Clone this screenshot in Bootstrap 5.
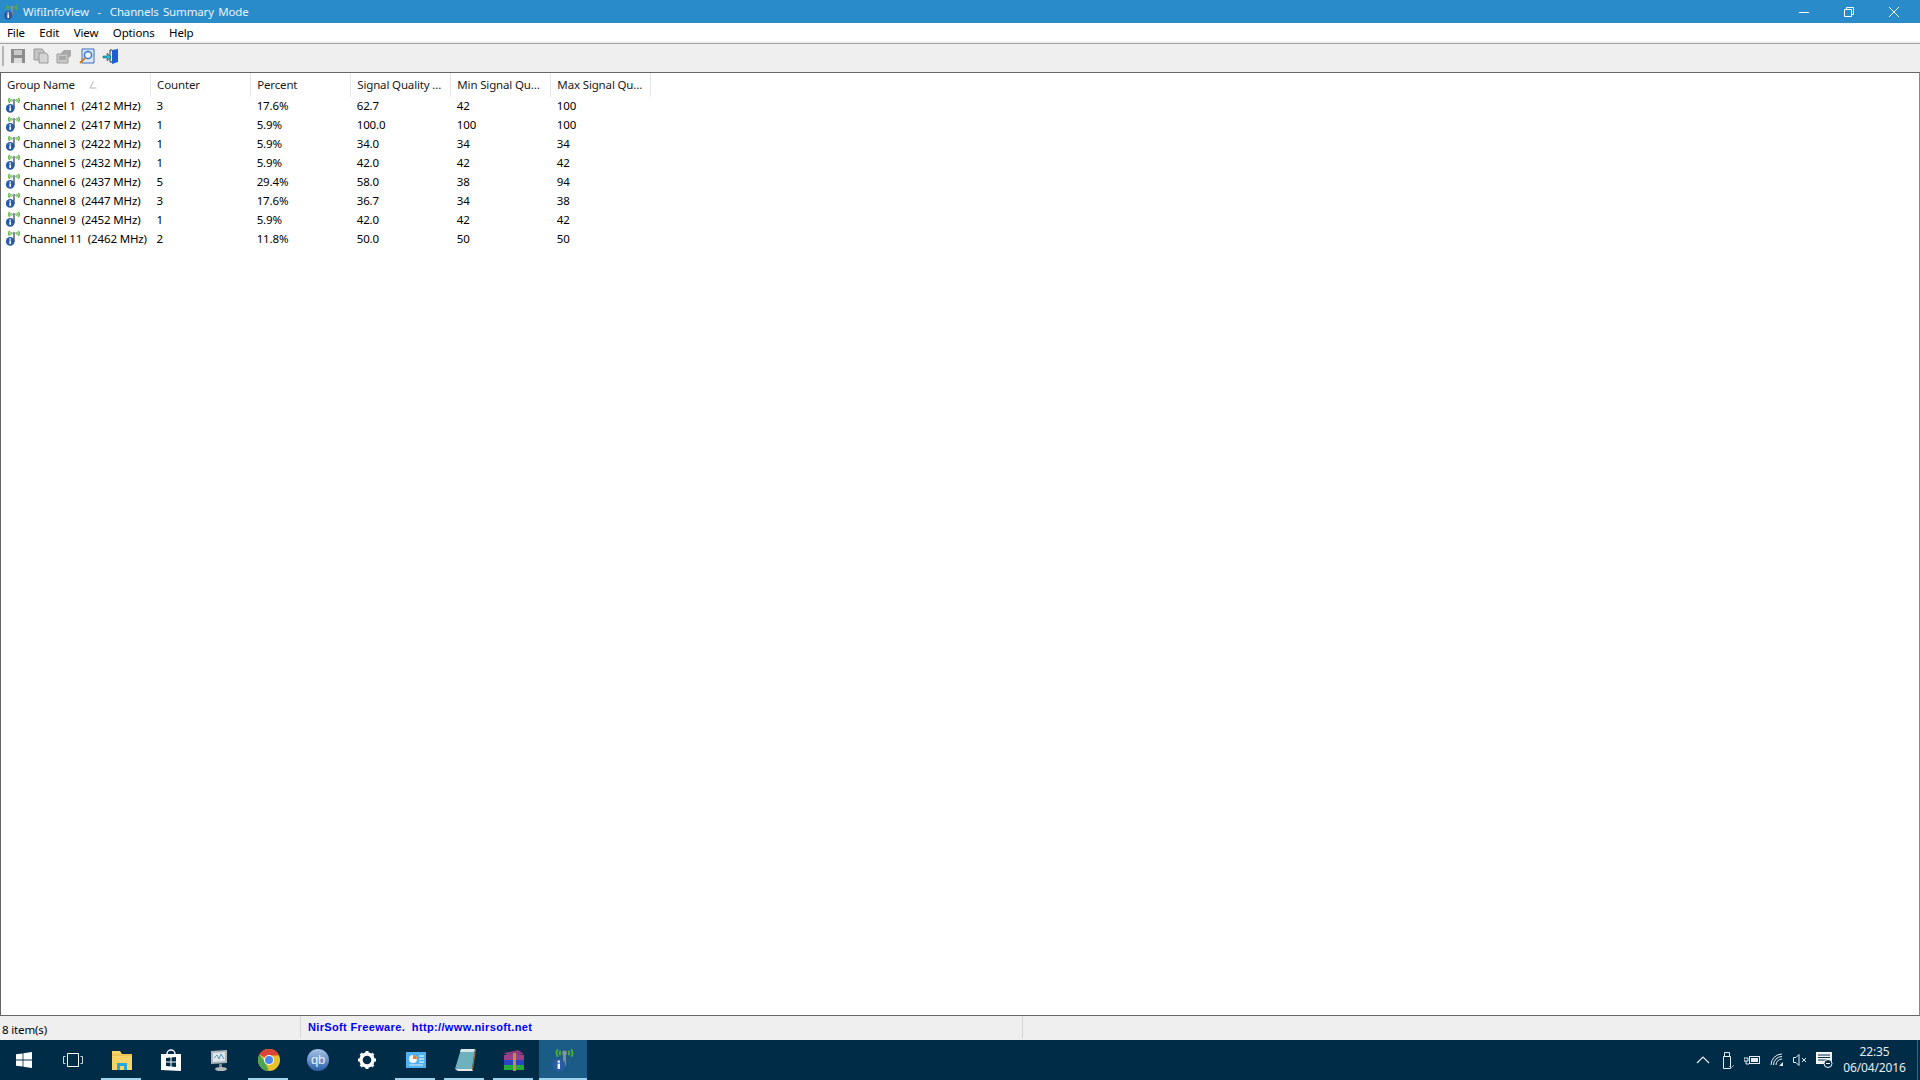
<!DOCTYPE html>
<html lang="en">
<head>
<meta charset="UTF-8">
<title>WifiInfoView - Channels Summary Mode</title>
<link href="https://cdn.jsdelivr.net/npm/bootstrap@5.3.0/dist/css/bootstrap.min.css" rel="stylesheet">
<style>
html, body { height: 100%; overflow: hidden; }
body { font-family: "Noto Sans", "Liberation Sans", sans-serif; font-size: 11.5px; letter-spacing: -.15px; color: #000; background: #fff; }
.app { height: 1080px; }
.titlebar { height: 23px; background: #2a8bcb; color: #fff; padding-left: 3px; }
.titlebar .ttl { margin-left: 4px; white-space: pre; color: #e8f3fa; word-spacing: 1.5px; }
.winctl { margin-right: 4px; }
.winbtn { width: 45px; height: 21px; }
.menubar { height: 20px; background: #fff; padding: 2px 0 0 7px; gap: 14.5px; border-bottom: 2px solid #f0f0f0; }
.tools { height: 29px; background: #efefef; border-top: 1px solid #a0a0a0; padding: 0 0 5px 1px; }
.tools .grip { width: 2px; height: 20px; background: #b5b5b5; margin: 0 6px 0 1px; }
.tools svg { margin-right: 7px; }
.listwrap { flex: 1; border: 1px solid #666; border-right-color: #888; min-height: 0; background: #fff; }
.wifitable { table-layout: fixed; width: 650px; margin: 0; }
.wifitable th, .wifitable td { padding: 0 0 0 6.5px; font-weight: 400; border: 0; white-space: pre; overflow: hidden; background: transparent; color: #000; font-size: 11.5px; letter-spacing: -.15px; }
.wifitable th { height: 24px; border-right: 1px solid #e5e5e5; position: relative; color: #1a1a1a; vertical-align: middle; padding-bottom: 1px; }
.wifitable th:first-child { padding-left: 6px; }
.wifitable td { height: 19px; line-height: 18px; padding-bottom: 1px; }
.wifitable td:first-child { padding-left: 4px; }
.wifitable td svg { vertical-align: -3px; margin-right: 2px; }
.sortmark { position: absolute; left: 88px; top: 8px; }
.statusbar { height: 24px; background: #efefef; }
.statusbar .cnt { width: 300px; padding-left: 2px; padding-top: 5px; }
.statusbar .lnk { width: 723px; border-left: 1px solid #d5d5d5; border-right: 1px solid #d5d5d5; padding-left: 7px; height: 22px; font-family: "Liberation Sans", Arial, sans-serif; font-weight: 700; font-size: 11px; letter-spacing: .35px; color: #0000f0; white-space: pre; line-height: 22px; }
.taskbar { height: 40px; background: #002c48; color: #e6edf2; }
.tbtn { width: 49px; height: 40px; position: relative; }
.tbtn.first { width: 48px; }
.tbtn.run::after { content: ""; position: absolute; left: 4px; right: 5px; bottom: 0; height: 2px; background: #9fd3ee; }
.tbtn.act { background: #1a5c85; width: 48px; margin-left: 1px; }
.tbtn.act::after { left: 0; right: 0; }
.trayi { width: 24.5px; height: 40px; }
.trayi.tight { width: 23.5px; }
.clock { width: 74px; margin-left: .5px; margin-right: 5.5px; font-size: 12px; line-height: 16px; text-align: center; color: #e6edf2; }
.deskline { width: 1px; height: 40px; background: #3d6078; margin-right: 2px; }
</style>
</head>
<body>
<svg width="0" height="0" class="d-block" style="position:absolute">
  <symbol id="wifi" viewBox="0 0 16 16">
    <path d="M4.500 .8a4.500 4.500 0 0 0 0 5M6.300 1.800a2.600 2.600 0 0 0 0 3M13.500 .8a4.500 4.500 0 0 1 0 5M11.700 1.800a2.600 2.600 0 0 1 0 3" fill="none" stroke="#4fb030" stroke-width="1.200"/>
    <rect x="8" y="4" width="2" height="8" fill="#7f8a96"/>
    <circle cx="9" cy="3.300" r="1.600" fill="#87929e"/>
    <circle cx="5.200" cy="11.400" r="4.300" fill="#2a5ca6"/>
    <rect x="4.400" y="10.400" width="1.600" height="3.500" fill="#fff"/>
    <rect x="4.400" y="8.400" width="1.600" height="1.300" fill="#fff"/>
  </symbol>
</svg>

<div class="app d-flex flex-column">
  <div class="titlebar d-flex align-items-center">
    <svg width="16" height="16"><use href="#wifi"/></svg>
    <span class="ttl">WifiInfoView  -  Channels Summary Mode</span>
    <div class="ms-auto d-flex winctl">
      <div class="winbtn d-flex align-items-center justify-content-center"><svg width="10" height="10"><path d="M0 5.500h10" stroke="#fff"/></svg></div>
      <div class="winbtn d-flex align-items-center justify-content-center"><svg width="10" height="10"><path d="M.5 2.500h7v7h-7zM2.500 2.500v-2h7v7h-2" fill="none" stroke="#fff"/></svg></div>
      <div class="winbtn d-flex align-items-center justify-content-center"><svg width="10" height="10"><path d="M0 0l10 10M10 0L0 10" stroke="#fff"/></svg></div>
    </div>
  </div>

  <div class="menubar d-flex align-items-center">
    <span>File</span><span>Edit</span><span>View</span><span>Options</span><span>Help</span>
  </div>

  <div class="tools d-flex align-items-center">
    <span class="grip"></span>
    <svg width="16" height="16"><path d="M1 1h14v14H1z" fill="#8c8c8c"/><rect x="4" y="2" width="8" height="5" fill="#c9c9c9"/><rect x="4" y="10" width="8" height="5" fill="#dcdcdc"/></svg>
    <svg width="16" height="16"><path d="M1 1h8l2 2v9H1z" fill="#c4c4c4" stroke="#9a9a9a"/><path d="M6 5h7l2 2v8H6z" fill="#d4d4d4" stroke="#9a9a9a"/></svg>
    <svg width="16" height="16"><path d="M1 6h11v9H1z" fill="#c8c8c8" stroke="#9c9c9c"/><path d="M4 6l4-4h7v6l-3 2V6z" fill="#a8a8a8"/><path d="M3 9h7M3 11h7" stroke="#8a8a8a"/></svg>
    <svg width="16" height="16"><path d="M3 1h12v14H3z" fill="#d9e8fa" stroke="#3a6fc0"/><circle cx="9" cy="7" r="3.600" fill="#eef6ff" stroke="#3a78c8" stroke-width="1.500"/><path d="M6 10l-5 5" stroke="#d2781e" stroke-width="2"/></svg>
    <svg width="17" height="16" viewBox="-1 0 17 16"><path d="M9 2l6-1v13l-6 2z" fill="#1f5fd0"/><path d="M9 2H7v12h2" fill="none" stroke="#333"/><path d="M0 8h4V5l4 4-4 4v-3H0z" fill="#17c4e8" stroke="#111" stroke-width=".4"/></svg>
  </div>

  <div class="listwrap">
    <table class="table wifitable" id="rows">
      <colgroup><col style="width:149px"><col style="width:100px"><col style="width:100px"><col style="width:100px"><col style="width:100px"><col style="width:100px"></colgroup>
      <thead>
        <tr>
          <th>Group Name<svg class="sortmark" width="8" height="8"><path d="M4.500 .5L1 7h6.500" fill="none" stroke="#b5b5b5"/></svg></th>
          <th>Counter</th><th>Percent</th><th>Signal Quality ...</th><th>Min Signal Qu...</th><th>Max Signal Qu...</th>
        </tr>
      </thead>
      <tbody></tbody>
    </table>
  </div>

  <div class="statusbar d-flex">
    <div class="cnt">8 item(s)</div>
    <div class="lnk">NirSoft Freeware.  http://www.nirsoft.net</div>
  </div>

  <div class="taskbar d-flex align-items-center">
    <div class="tbtn first d-flex align-items-center justify-content-center">
      <svg width="16" height="16"><path d="M0 2.300l6.600-.9v6.200H0zM7.400 1.300L16 0v7.600H7.400zM0 8.400h6.600v6.200L0 13.700zM7.400 8.400H16V16l-8.600-1.300z" fill="#fff"/></svg>
    </div>
    <div class="tbtn d-flex align-items-center justify-content-center">
      <svg width="20" height="16"><path d="M4.500 1.500h11v13h-11z" fill="none" stroke="#fff"/><path d="M2.500 4.500H.5v7h2M17.500 4.500h2v7h-2" fill="none" stroke="#cfd8de"/></svg>
    </div>
    <div class="tbtn run d-flex align-items-center justify-content-center">
      <svg width="22" height="22"><path d="M1 2h8l2 3h10v16H1z" fill="#f6d468"/><path d="M1 6h20" stroke="#e4b640"/><path d="M6 14h10v7h-3v-4H9v4H6z" fill="#23a9e0"/></svg>
    </div>
    <div class="tbtn d-flex align-items-center justify-content-center">
      <svg width="22" height="24"><path d="M7 6a4 4 0 0 1 8 0" fill="none" stroke="#fff" stroke-width="1.400"/><path d="M1 6h20v17l-20-1z" fill="#fff"/><path d="M6 10l4.500-.5v4H6zM11.500 9.400l4.500-.4v4.500h-4.500zM6 14.500h4.500v4L6 18zM11.500 14.500H16V19l-4.500-.5z" fill="#002c48"/></svg>
    </div>
    <div class="tbtn d-flex align-items-center justify-content-center">
      <svg width="24" height="24"><path d="M3 3l16-1v13L3 16z" fill="#aeb6bb"/><path d="M5 5l12-1v9L5 14z" fill="#dfe8ee"/><path d="M6 10l3-3 2 4 2-5 3 5" fill="none" stroke="#5b93b8"/><path d="M11 16h3v3h-3z" fill="#888"/><ellipse cx="13" cy="21" rx="6" ry="2" fill="#b9b9b9"/></svg>
    </div>
    <div class="tbtn run d-flex align-items-center justify-content-center">
      <svg width="24" height="24" viewBox="0 0 24 24"><circle cx="12" cy="12" r="11" fill="#e9c12d"/><path d="M12 12L2.500 6.500A11 11 0 0 1 22 7.500H12z" fill="#dc4438"/><path d="M12 23A11 11 0 0 1 2.500 6.500L8 14z" fill="#4aa453"/><circle cx="12" cy="12" r="5" fill="#fff"/><circle cx="12" cy="12" r="4" fill="#4b88ee"/></svg>
    </div>
    <div class="tbtn d-flex align-items-center justify-content-center">
      <svg width="24" height="24"><defs><linearGradient id="qbg" x1="0" y1="0" x2="0" y2="1"><stop offset="0" stop-color="#a9c4e6"/><stop offset="1" stop-color="#2a5fa8"/></linearGradient></defs><circle cx="12" cy="12" r="11" fill="url(#qbg)"/><text x="12" y="16" text-anchor="middle" font-family="Liberation Sans" font-size="13" fill="#e8f0fa">qb</text></svg>
    </div>
    <div class="tbtn d-flex align-items-center justify-content-center">
      <svg width="20" height="20" viewBox="0 0 20 20"><circle cx="10" cy="10" r="6" fill="none" stroke="#fff" stroke-width="3.400"/><path d="M10 1v3M10 16v3M1 10h3M16 10h3M3.600 3.600l2.200 2.200M14.200 14.200l2.200 2.200M16.400 3.600l-2.200 2.200M5.800 14.200l-2.200 2.200" stroke="#fff" stroke-width="3"/></svg>
    </div>
    <div class="tbtn run d-flex align-items-center justify-content-center">
      <svg width="22" height="20"><rect x="1" y="2" width="20" height="16" fill="#4fb2ee"/><circle cx="8" cy="9" r="4" fill="#f5f8fa"/><path d="M8 9V5a4 4 0 0 1 4 4z" fill="#e6802c"/><path d="M14 6h5M14 9h5M14 12h5" stroke="#fff"/><path d="M4 15h14" stroke="#dfeef8"/></svg>
    </div>
    <div class="tbtn run d-flex align-items-center justify-content-center">
      <svg width="24" height="26"><path d="M8 2h14l-3 20H2z" fill="#6db1bc"/><path d="M8 2h14l-1 3H7z" fill="#d9e4e8"/><path d="M2 22h17l1 2H5z" fill="#e7e7e7"/><path d="M19 22l3-20 1 1-3 20z" fill="#9a6e3b"/></svg>
    </div>
    <div class="tbtn run d-flex align-items-center justify-content-center">
      <svg width="24" height="22"><path d="M2 4l14-3 6 4-14 3z" fill="#8e3c7e"/><rect x="2" y="6" width="20" height="5" fill="#9c3f8a"/><rect x="2" y="11" width="20" height="5" fill="#2a44c4"/><rect x="2" y="16" width="20" height="5" fill="#25a83a"/><rect x="11" y="4" width="3" height="18" fill="#b98f4a"/></svg>
    </div>
    <div class="tbtn act run d-flex align-items-center justify-content-center">
      <svg width="24" height="24"><use href="#wifi"/></svg>
    </div>

    <div class="ms-auto d-flex align-items-center">
      <div class="trayi d-flex align-items-center justify-content-center"><svg width="14" height="8"><path d="M1 7l6-6 6 6" fill="none" stroke="#e6edf2" stroke-width="1.200"/></svg></div>
      <div class="trayi d-flex align-items-center justify-content-center"><svg width="14" height="17"><path d="M2.500 4.500h7v12h-7zM3.500 4.500V.5h5v4" fill="none" stroke="#e6edf2"/><path d="M8 14l2 2 3-3" fill="none" stroke="#8fa5b3"/></svg></div>
      <div class="trayi d-flex align-items-center justify-content-center"><svg width="16" height="12"><rect x="5.500" y="2.500" width="10" height="7" fill="none" stroke="#e6edf2"/><rect x="7" y="4" width="7" height="4" fill="#e6edf2"/><path d="M0 4h4v3H0zM2 7v3h3" fill="none" stroke="#e6edf2"/></svg></div>
      <div class="trayi d-flex align-items-center justify-content-center"><svg width="14" height="14"><path d="M1 12a11 11 0 0 1 11-11M3.500 12a8.500 8.500 0 0 1 8.500-8.500M6 12a6 6 0 0 1 6-6" fill="none" stroke="#e6edf2"/><path d="M9 13h4V9z" fill="#e6edf2"/></svg></div>
      <div class="trayi tight d-flex align-items-center justify-content-center"><svg width="15" height="12"><path d="M.5 3.500h2.500l3-3v11l-3-3H.5z" fill="none" stroke="#e6edf2"/><path d="M9 4l4 4M13 4l-4 4" stroke="#e6edf2"/></svg></div>
      <div class="trayi d-flex align-items-center justify-content-center"><svg width="17" height="16"><path d="M0 0h16v12H0z" fill="#f4f7f9"/><path d="M2 3h12M2 5.500h12M2 8h8" stroke="#002c48"/><circle cx="12" cy="11.500" r="4" fill="#002c48" stroke="#f4f7f9"/><path d="M10 11.500h4" stroke="#f4f7f9"/></svg></div>
      <div class="clock"><div>22:35</div><div>06/04/2016</div></div>
      <div class="deskline"></div>
    </div>
  </div>
</div>

<script>
// channel rows
const rows = [
  ["Channel 1  (2412 MHz)", "3", "17.6%", "62.7", "42", "100"],
  ["Channel 2  (2417 MHz)", "1", "5.9%", "100.0", "100", "100"],
  ["Channel 3  (2422 MHz)", "1", "5.9%", "34.0", "34", "34"],
  ["Channel 5  (2432 MHz)", "1", "5.9%", "42.0", "42", "42"],
  ["Channel 6  (2437 MHz)", "5", "29.4%", "58.0", "38", "94"],
  ["Channel 8  (2447 MHz)", "3", "17.6%", "36.7", "34", "38"],
  ["Channel 9  (2452 MHz)", "1", "5.9%", "42.0", "42", "42"],
  ["Channel 11  (2462 MHz)", "2", "11.8%", "50.0", "50", "50"]
];
let html = "";
rows.forEach(r => {
  html += `<tr><td><svg width="16" height="16"><use href="#wifi"/></svg>${r[0]}</td>` +
    r.slice(1).map(v => `<td>${v}</td>`).join("") + `</tr>`;
});
document.querySelector("#rows tbody").innerHTML = html;
</script>
<script src="https://cdn.jsdelivr.net/npm/bootstrap@5.3.0/dist/js/bootstrap.bundle.min.js"></script>
</body>
</html>
